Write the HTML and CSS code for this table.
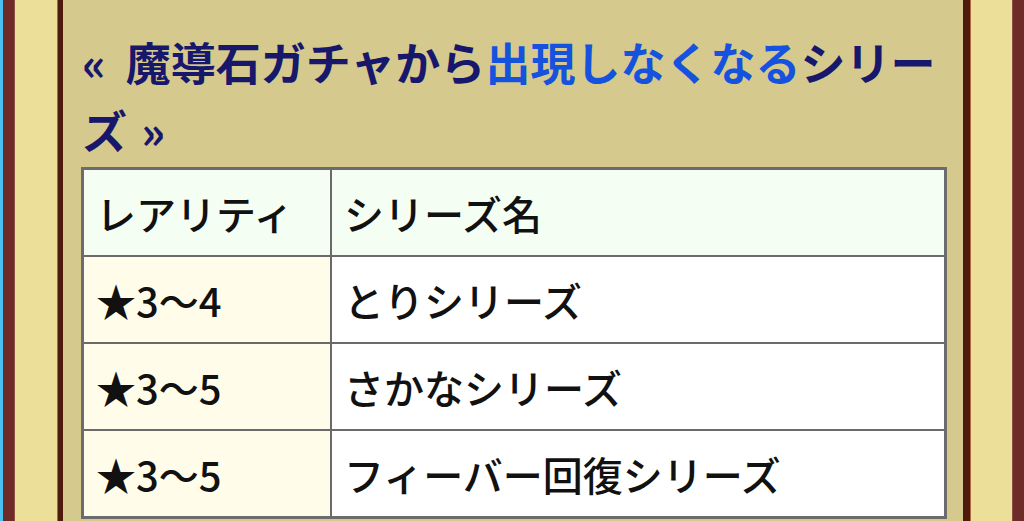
FILE: index.html
```html
<!DOCTYPE html>
<html lang="ja">
<head>
<meta charset="utf-8">
<link rel="stylesheet" href="styles.css">
</head>
<body>
<div class="page">
  <div class="sky"></div>
  <div class="rail rail-left"></div>
  <div class="gutter gutter-left"></div>
  <main class="content">
    <h2 class="title"><span class="guil">«</span>魔導石ガチャから<a class="link" href="#">出現しなくなる</a>シリーズ <span class="guil-end">»</span></h2>
    <table class="series">
      <tr class="head">
        <td class="c1">レアリティ</td>
        <td class="c2">シリーズ名</td>
      </tr>
      <tr>
        <td class="c1">★3〜4</td>
        <td class="c2">とりシリーズ</td>
      </tr>
      <tr>
        <td class="c1">★3〜5</td>
        <td class="c2">さかなシリーズ</td>
      </tr>
      <tr>
        <td class="c1">★3〜5</td>
        <td class="c2">フィーバー回復シリーズ</td>
      </tr>
    </table>
  </main>
  <div class="gutter gutter-right"></div>
  <div class="rail rail-right"></div>
</div>
</body>
</html>
```

FILE: styles.css
```css
html, body {
  margin: 0;
  padding: 0;
  height: 100%;
  overflow: hidden;
}
body {
  font-family: "Noto Sans CJK JP", "Noto Sans", sans-serif;
  background: #d6c98d;
}
.page {
  display: flex;
  height: 521px;
  width: 1024px;
}
.sky {
  width: 3px;
  background: #4cc0f2;
  flex: none;
}
.rail {
  width: 12px;
  background: #6e2c29;
  flex: none;
  box-sizing: border-box;
}
.rail-left {
  border-right: 1px solid #8e5040;
}
.rail-right {
  border-left: 1px solid #8e5040;
}
.gutter {
  flex: none;
  box-sizing: border-box;
  background: #ebdf99;
}
.gutter-left {
  width: 48px;
  border-right: 5px solid #4e1a0c;
  box-shadow: inset -1px 0 0 #b06a40;
}
.gutter-right {
  width: 49px;
  border-left: 7px solid #4e1a0c;
  box-shadow: inset 1px 0 0 #b06a40;
}
.content {
  flex: none;
  box-sizing: border-box;
  width: 900px;
  padding: 28px 17px 0 18px;
  background: #d6c98d;
}
.title {
  margin: 0 0 3px 1px;
  font-size: 45px;
  line-height: 68px;
  font-weight: bold;
  color: #17186b;
}
.guil {
  margin-right: 20px;
}
.guil-end {
  margin-left: 4px;
}
.link {
  color: #1552dd;
  text-decoration: none;
}
.series {
  width: 866px;
  border-collapse: collapse;
  border: 3px solid #6c6c6c;
  font-size: 40px;
  font-weight: 500;
  color: #111;
}
.series td {
  border: 2px solid #6a6a6a;
  height: 85px;
  padding: 0 12px;
  vertical-align: middle;
  line-height: 1;
}
.series .c1 {
  width: 222px;
  background: #fffde9;
}
.series .c2 {
  background: #ffffff;
}
.series .head td {
  background: #f4fef3;
}
```
